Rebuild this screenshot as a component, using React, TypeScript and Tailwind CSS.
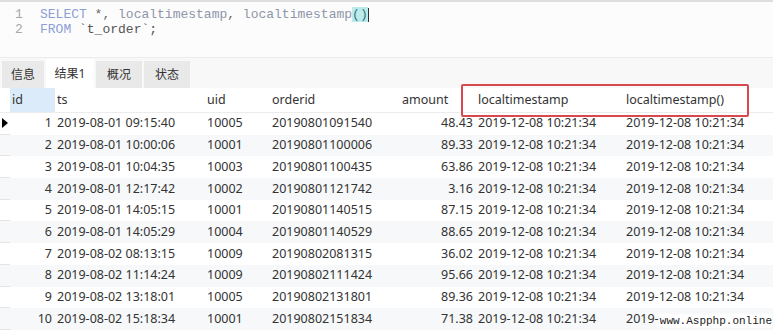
import React from "react";

const rows = [
  ["1", "2019-08-01 09:15:40", "10005", "20190801091540", "48.43"],
  ["2", "2019-08-01 10:00:06", "10001", "20190801100006", "89.33"],
  ["3", "2019-08-01 10:04:35", "10003", "20190801100435", "63.86"],
  ["4", "2019-08-01 12:17:42", "10002", "20190801121742", "3.16"],
  ["5", "2019-08-01 14:05:15", "10001", "20190801140515", "87.15"],
  ["6", "2019-08-01 14:05:29", "10004", "20190801140529", "88.65"],
  ["7", "2019-08-02 08:13:15", "10009", "20190802081315", "36.02"],
  ["8", "2019-08-02 11:14:24", "10009", "20190802111424", "95.66"],
  ["9", "2019-08-02 13:18:01", "10005", "20190802131801", "89.36"],
  ["10", "2019-08-02 15:18:34", "10001", "20190802151834", "71.38"],
];

const stamp = "2019-12-08 10:21:34";

export default function App() {
  return (
    <div className="w-[773px] h-[330px] overflow-hidden bg-white relative text-[#333]" style={{fontFamily: '"Noto Sans", "Noto Sans CJK SC", sans-serif'}}>
      {/* editor */}
      <div className="h-[58px] bg-[#fcfcfc] border-t-2 border-[#dedede] border-b border-b-[#ececec] pt-[5px] font-['Liberation_Mono',monospace] text-[13px] leading-[15px]">
        <div className="flex">
          <div className="w-[40px] pl-[15px] text-[#a8a8a8]">1</div>
          <div className="whitespace-pre">
            <span className="text-[#8c9ed6]">SELECT</span>
            <span className="text-[#6a6a6a]"> *, </span>
            <span className="text-[#8e96a8]">localtimestamp</span>
            <span className="text-[#6a6a6a]">, </span>
            <span className="text-[#8e96a8]">localtimestamp</span>
            <span className="bg-[#bfeaea] text-[#2a7a8a]">()</span>
            <span className="inline-block w-px h-[14px] bg-[#333] align-middle"></span>
          </div>
        </div>
        <div className="flex">
          <div className="w-[40px] pl-[15px] text-[#a8a8a8]">2</div>
          <div className="whitespace-pre">
            <span className="text-[#8c9ed6]">FROM</span>
            <span className="text-[#555]"> `t_order`;</span>
          </div>
        </div>
      </div>

      {/* tabs */}
      <div className="h-[30px] flex items-end pl-[2px] gap-[2px] bg-[#f8f8f8] text-[12px]">
        <div className="w-[42px] h-[27px] flex items-center justify-center bg-[#e9e9e9]">信息</div>
        <div className="w-[48px] h-[29px] flex items-center justify-center bg-white">结果1</div>
        <div className="w-[46px] h-[27px] flex items-center justify-center bg-[#e9e9e9]">概况</div>
        <div className="w-[46px] h-[27px] flex items-center justify-center bg-[#e9e9e9]">状态</div>
      </div>

      {/* grid */}
      <div className="text-[12.5px]">
        <div className="h-[25px] flex items-center border-b border-[#ececec]">
          <div className="w-[10px] h-full"></div>
          <div className="w-[45px] h-full bg-[#dcebfa] pl-[2px] flex items-center">id</div>
          <div className="w-[150px] pl-[2px]">ts</div>
          <div className="w-[65px] pl-[2px]">uid</div>
          <div className="w-[130px] pl-[2px]">orderid</div>
          <div className="w-[76px] pl-[2px]">amount</div>
          <div className="w-[150px] pl-[2px]">localtimestamp</div>
          <div className="flex-1">localtimestamp()</div>
        </div>
        {rows.map((r, i) => (
          <div key={i} className={`h-[21.7px] flex items-center whitespace-nowrap ${i % 2 === 0 ? "bg-white" : "bg-[#f7f8f9]"}`}>
            <div className="w-[10px] h-full border-b border-[#e4e4e4] flex items-center justify-center">
              {i === 0 && <div className="w-0 h-0 border-y-[5px] border-y-transparent border-l-[6px] border-l-black"></div>}
            </div>
            <div className="w-[45px] text-right pr-[3px]">{r[0]}</div>
            <div className="w-[150px] pl-[2px]">{r[1]}</div>
            <div className="w-[65px] pl-[2px]">{r[2]}</div>
            <div className="w-[130px] pl-[2px]">{r[3]}</div>
            <div className="w-[76px] text-right pr-[3px]">{r[4]}</div>
            <div className="w-[150px] pl-[2px]">{stamp}</div>
            {i === rows.length - 1 ? <span>2019-</span> : <div className="flex-1">{stamp}</div>}
          </div>
        ))}
      </div>

      {/* highlight box */}
      <div className="absolute left-[461px] top-[84px] w-[288px] h-[33px] border-2 border-[#d8494f] rounded-[2px]"></div>

      {/* watermark */}
      <div className="absolute right-[1px] bottom-[2px] bg-white/90 pl-[1px] font-['Liberation_Mono',monospace] text-[11px] leading-[14px] text-[#222]">www.Aspphp.online</div>
    </div>
  );
}
